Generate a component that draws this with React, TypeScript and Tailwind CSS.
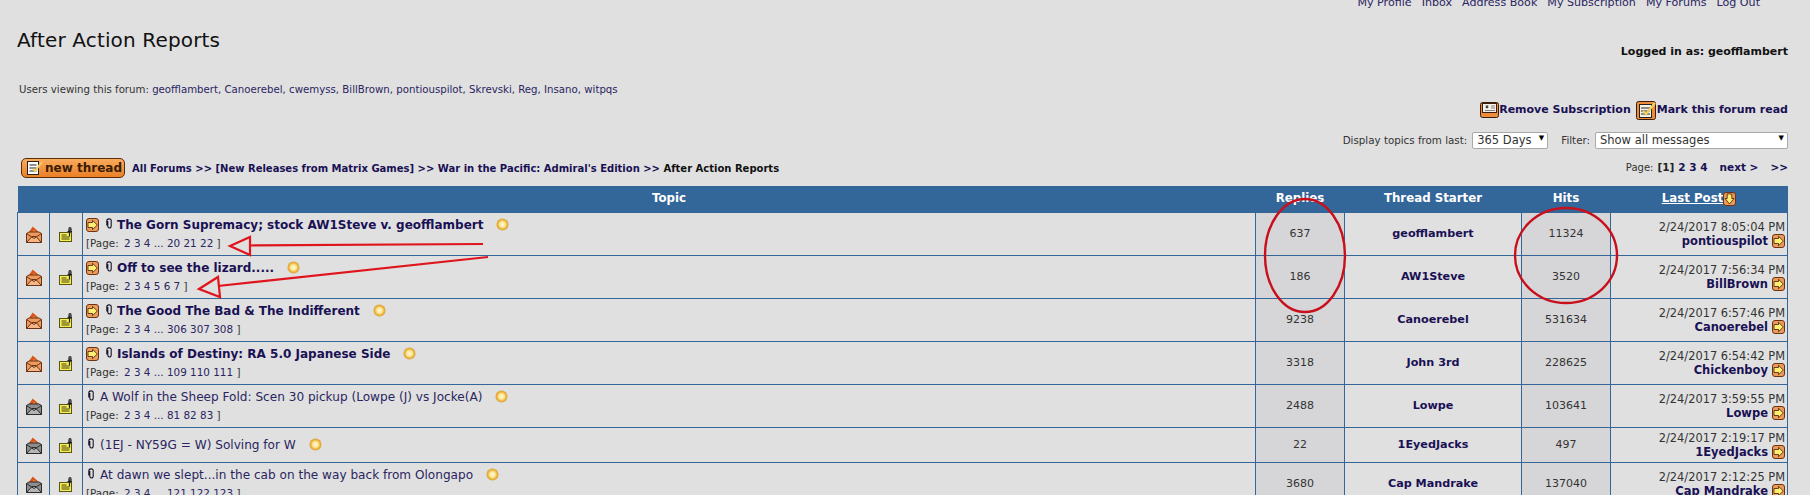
const font = "font-['DejaVu_Sans','Liberation_Sans',sans-serif]";

type Topic = {
  title: string;
  isNew: boolean;
  pages?: string;
  replies: string;
  starter: string;
  hits: string;
  date: string;
  last: string;
};

const topics: Topic[] = [
  { title: "The Gorn Supremacy; stock AW1Steve v. geofflambert", isNew: true, pages: "2 3 4 ... 20 21 22", replies: "637", starter: "geofflambert", hits: "11324", date: "2/24/2017 8:05:04 PM", last: "pontiouspilot" },
  { title: "Off to see the lizard.....", isNew: true, pages: "2 3 4 5 6 7", replies: "186", starter: "AW1Steve", hits: "3520", date: "2/24/2017 7:56:34 PM", last: "BillBrown" },
  { title: "The Good The Bad & The Indifferent", isNew: true, pages: "2 3 4 ... 306 307 308", replies: "9238", starter: "Canoerebel", hits: "531634", date: "2/24/2017 6:57:46 PM", last: "Canoerebel" },
  { title: "Islands of Destiny: RA 5.0 Japanese Side", isNew: true, pages: "2 3 4 ... 109 110 111", replies: "3318", starter: "John 3rd", hits: "228625", date: "2/24/2017 6:54:42 PM", last: "Chickenboy" },
  { title: "A Wolf in the Sheep Fold: Scen 30 pickup (Lowpe (J) vs Jocke(A)", isNew: false, pages: "2 3 4 ... 81 82 83", replies: "2488", starter: "Lowpe", hits: "103641", date: "2/24/2017 3:59:55 PM", last: "Lowpe" },
  { title: "(1EJ - NY59G = W) Solving for W", isNew: false, replies: "22", starter: "1EyedJacks", hits: "497", date: "2/24/2017 2:19:17 PM", last: "1EyedJacks" },
  { title: "At dawn we slept...in the cab on the way back from Olongapo", isNew: false, pages: "2 3 4 ... 121 122 123", replies: "3680", starter: "Cap Mandrake", hits: "137040", date: "2/24/2017 2:12:25 PM", last: "Cap Mandrake" },
];

function ArrowBox({ down = false }: { down?: boolean }) {
  return (
    <svg width="13" height="14" viewBox="0 0 13 14" className="inline-block shrink-0">
      <rect x="0.500" y="0.500" width="12" height="13" rx="2.500" fill="#ee9a58" stroke="#6a3414" />
      {down ? (
        <path d="M4.200 2h4.600v4.500h2.200L6.500 12 2 6.500h2.200z" fill="#ffee70" stroke="#3c2010" strokeWidth="0.800" />
      ) : (
        <path d="M2 4.500h4.500V2.300L11.300 7l-4.800 4.700V9.500H2z" fill="#ffee70" stroke="#3c2010" strokeWidth="0.800" />
      )}
    </svg>
  );
}

function Clip() {
  return (
    <svg width="6" height="11" viewBox="0 0 6 11" className="inline-block shrink-0">
      <path d="M1.800 3v5c0 2.700 3.400 2.700 3.400 0V2.500C5.200 0.300 0.800 0.300 0.800 3v4.500" fill="none" stroke="#15152a" strokeWidth="1.100" />
    </svg>
  );
}

function Orb() {
  return (
    <svg width="13" height="13" viewBox="0 0 13 13" className="inline-block shrink-0">
      <defs>
        <radialGradient id="orb-fill">
          <stop offset="0%" stopColor="#fff8d0" />
          <stop offset="45%" stopColor="#fbe8a0" />
          <stop offset="75%" stopColor="#eeb63c" />
          <stop offset="100%" stopColor="#d8a03a" />
        </radialGradient>
      </defs>
      <circle cx="6.500" cy="6.500" r="6" fill="url(#orb-fill)" />
    </svg>
  );
}

function Envelope({ isNew }: { isNew: boolean }) {
  const body = isNew ? "#ee9a5e" : "#8e8e8e";
  const lower = isNew ? "#f6b584" : "#b4b4b4";
  const line = isNew ? "#6a3414" : "#2c2c2c";
  return (
    <svg width="16" height="17" viewBox="0 0 16 17">
      <path d="M2.500 8C3.500 4 5.500 3 6.500 0.500 8 2 11.500 3.500 13.500 8z" fill="#d8561a" />
      <path d="M5 8c1-2 2-2.500 3-4 1 1 2 2 3 4z" fill="#f0954e" />
      <path d="M0.500 7.500 3 6h10l2.500 1.500v9h-15z" fill={body} stroke={line} />
      <path d="M0.500 16.500 6 10.500h4l5.500 6z" fill={lower} stroke={line} />
      <path d="M0.500 7.500 8 12.500l7.500-5" fill="none" stroke={line} />
    </svg>
  );
}

function Note() {
  return (
    <svg width="14" height="15" viewBox="0 0 14 15">
      <rect x="0.500" y="5.500" width="12" height="9" fill="#f8ee4c" stroke="#55551c" />
      <path d="M2.500 8h5M2.500 10h8M2.500 12h8" stroke="#44441c" />
      <path d="M10.500 9.500V3" stroke="#222" strokeWidth="1.200" />
      <path d="M9.500 3.500 10 0.500h2l0.500 3z" fill="#555" stroke="#222" strokeWidth="0.600" />
      <path d="M8.500 4.500h4.500" stroke="#222" />
    </svg>
  );
}

function NewThreadButton() {
  return (
    <div className="relative flex h-[20px] w-[104px] items-center rounded-[5px] border border-[#5a2e08] bg-gradient-to-b from-[#f9ab5c] to-[#ea7f22] pl-[23px]">
      <svg width="18" height="16" viewBox="0 0 18 16" className="absolute left-[4px] top-[1px]">
        <rect x="1.500" y="1.500" width="11" height="13" fill="#fff" stroke="#222" />
        <path d="M3.500 5h7M3.500 8h7M3.500 11h7" stroke="#222" />
        <path d="M7 9l2 2 7-9" fill="none" stroke="#f2d060" strokeWidth="2" />
      </svg>
      <span className="whitespace-nowrap text-[12px] font-bold leading-none text-[#3a1c04]">new thread</span>
    </div>
  );
}

function SubIcon() {
  return (
    <svg width="19" height="16" viewBox="0 0 19 16" className="shrink-0">
      <rect x="0.500" y="0.500" width="18" height="15" rx="2" fill="#ec8c3c" stroke="#3a1c08" />
      <rect x="2.500" y="1.500" width="14" height="9" fill="#f5f2e8" stroke="#3a1c08" />
      <path d="M6 3.500l2 2.500M8 3.500 6 6M7 3v3.500M5.500 5H8.500" stroke="#222" strokeWidth="0.700" />
      <path d="M11 4h4M11 6h4M5 8.500h10" stroke="#666" strokeWidth="0.800" />
    </svg>
  );
}

function MarkIcon() {
  return (
    <svg width="21" height="19" viewBox="0 0 21 19" className="shrink-0">
      <rect x="0.500" y="0.500" width="19" height="18" rx="2" fill="#ec8c3c" stroke="#3a1c08" />
      <rect x="3.500" y="3.500" width="12" height="13" fill="#f5f2e8" stroke="#222" />
      <path d="M5 7h9M5 10h9M5 13h9" stroke="#222" />
      <path d="M7 10l3 3 9-11" fill="none" stroke="#f2d060" strokeWidth="2.400" />
    </svg>
  );
}

function FakeSelect({ value, className }: { value: string; className: string }) {
  return (
    <div className={`relative flex h-[17px] items-center rounded-[2px] border border-[#a9a9a9] bg-white pl-[4px] pt-[1px] text-[11.500px] text-[#333] ${className}`}>
      {value}
      <span className="absolute right-[3px] top-[0px] text-[7px] text-black">▼</span>
    </div>
  );
}

function TopicRow({ t }: { t: Topic }) {
  const height = t.pages ? "h-[43px]" : "h-[35px]";
  return (
    <tr className={height}>
      <td className="border border-[#336699] p-0 text-center">
        <div className="flex justify-center pt-[1px]">
          <Envelope isNew={t.isNew} />
        </div>
      </td>
      <td className="border border-[#336699] p-0 text-center">
        <div className="flex justify-center pt-[2px]">
          <Note />
        </div>
      </td>
      <td className="border border-[#336699] py-0 pl-[3px] pr-0 text-left">
        <div className={t.pages ? "-mt-[2px] flex items-center" : "flex items-center"}>
          {t.isNew && <ArrowBox />}
          <span className={t.isNew ? "ml-[7px] -mt-[3px] flex" : "ml-[2px] -mt-[3px] flex"}>
            <Clip />
          </span>
          <span
            className={
              t.isNew
                ? "ml-[5px] text-[12px] font-bold leading-[16px] text-[#191154]"
                : "ml-[6px] text-[12.100px] leading-[16px] text-[#2a2560]"
            }
          >
            {t.title}
          </span>
          <span className="ml-[13px] flex">
            <Orb />
          </span>
        </div>
        {t.pages && (
          <div className="mt-[4px] text-[10.400px] leading-[12px] text-[#333]">
            [Page: <span className="ml-[2px] text-[#2a2560]">{t.pages}</span> ]
          </div>
        )}
      </td>
      <td className="border border-[#336699] bg-[#d6d6d8] p-0 pt-[2px] text-center text-[11px] text-[#333]">{t.replies}</td>
      <td className="border border-[#336699] p-0 pt-[2px] text-center text-[11.200px] font-bold text-[#191154]">{t.starter}</td>
      <td className="border border-[#336699] bg-[#d6d6d8] p-0 pt-[2px] text-center text-[11px] text-[#333]">{t.hits}</td>
      <td className="border border-[#336699] pb-0 pl-0 pr-[2px] pt-[2px] text-right">
        <div className="text-[11.400px] leading-[13px] text-[#333]">{t.date}</div>
        <div className="flex items-center justify-end text-[11.500px] font-bold leading-[14px] text-[#191154]">
          {t.last}
          <span className="ml-[4px] flex">
            <ArrowBox />
          </span>
        </div>
      </td>
    </tr>
  );
}

export default function App() {
  return (
    <div className={`relative h-[495px] overflow-hidden bg-[#e0e0e0] ${font}`}>
      <div className="pl-[17px] pr-[22px]">
        <div className="-mt-[4px] flex h-[14px] justify-end gap-[10px] pr-[28px] text-[11.100px] leading-[14px] text-[#2a2560]">
          <span>My Profile</span>
          <span>Inbox</span>
          <span>Address Book</span>
          <span>My Subscription</span>
          <span>My Forums</span>
          <span>Log Out</span>
        </div>

        <div className="mt-[19px] flex h-[35px] items-start justify-between">
          <h1 className="text-[20px] leading-[22px] tracking-[0.15px] text-[#111]">After Action Reports</h1>
          <div className="pt-[15px] text-[11px] font-bold leading-[16px] text-[#111]">Logged in as: geofflambert</div>
        </div>

        <div className="mt-[20px] h-[12px] pl-[2px] text-[10.200px] leading-[12px] text-[#333]">
          Users viewing this forum:{" "}
          <span className="text-[#2a2560]">
            geofflambert, Canoerebel, cwemyss, BillBrown, pontiouspilot, Skrevski, Reg, Insano, witpqs
          </span>
        </div>

        <div className="mt-[6px] flex h-[16px] items-center justify-end text-[11px] font-bold text-[#191154]">
          <SubIcon />
          <span>Remove Subscription</span>
          <span className="ml-[5px]">
            <MarkIcon />
          </span>
          <span>Mark this forum read</span>
        </div>

        <div className="mt-[14px] flex h-[17px] items-center justify-end text-[10.300px] text-[#333]">
          <span className="mr-[5px]">Display topics from last:</span>
          <FakeSelect value="365 Days" className="w-[76px]" />
          <span className="ml-[13px] mr-[5px]">Filter:</span>
          <FakeSelect value="Show all messages" className="w-[193px]" />
        </div>

        <div className="mt-[9px] flex h-[20px] items-center">
          <div className="ml-[4px]">
            <NewThreadButton />
          </div>
          <div className="ml-[7px] text-[10px] font-bold text-[#191154]">
            All Forums &gt;&gt; [New Releases from Matrix Games] &gt;&gt; War in the Pacific: Admiral's Edition &gt;&gt;{" "}
            <span className="text-[#111]">After Action Reports</span>
          </div>
          <div className="ml-auto flex items-baseline text-[10px] text-[#333]">
            Page:
            <span className="ml-[4px] text-[10.500px] font-bold text-[#222]">[1]</span>
            <span className="ml-[4px] text-[10.500px] font-bold text-[#191154]">2 3 4</span>
            <span className="ml-[12px] text-[10.500px] font-bold text-[#191154]">next &gt;</span>
            <span className="ml-[12px] text-[10.500px] font-bold text-[#191154]">&gt;&gt;</span>
          </div>
        </div>

        <table className="mt-[8px] w-[1771px] table-fixed border-collapse">
          <colgroup>
            <col className="w-[32px]" />
            <col className="w-[33px]" />
            <col />
            <col className="w-[89px]" />
            <col className="w-[177px]" />
            <col className="w-[89px]" />
            <col className="w-[177px]" />
          </colgroup>
          <thead>
            <tr className="h-[26px] bg-[#336699] text-[11.800px] font-bold text-white">
              <th className="p-0" />
              <th className="p-0" />
              <th className="p-0 text-center font-bold">Topic</th>
              <th className="p-0 text-center font-bold">Replies</th>
              <th className="p-0 text-center font-bold">Thread Starter</th>
              <th className="p-0 text-center font-bold">Hits</th>
              <th className="p-0 text-center font-bold">
                <span className="inline-flex items-center">
                  <span className="underline">Last Post</span>
                  <ArrowBox down />
                </span>
              </th>
            </tr>
          </thead>
          <tbody>
            {topics.map((t) => (
              <TopicRow key={t.title} t={t} />
            ))}
          </tbody>
        </table>
      </div>

      {/* hand-drawn red annotations on top of the forum */}
      <svg className="pointer-events-none absolute left-0 top-0 h-[495px] w-[1810px]" viewBox="0 0 1810 495" fill="none">
        <g stroke="#e0141c" strokeWidth="2.200">
          <path d="M483 244 L250 245.500" />
          <path d="M230 246 L250 237 L250 255 Z" />
          <path d="M488 257 L218 286" />
          <path d="M199 289 L218 277 L220 297 Z" />
        </g>
        <g stroke="#c8101c" strokeWidth="2.400">
          <ellipse cx="1305" cy="255.500" rx="40" ry="56.500" />
          <ellipse cx="1566" cy="255.500" rx="51" ry="47.500" />
        </g>
      </svg>
    </div>
  );
}
